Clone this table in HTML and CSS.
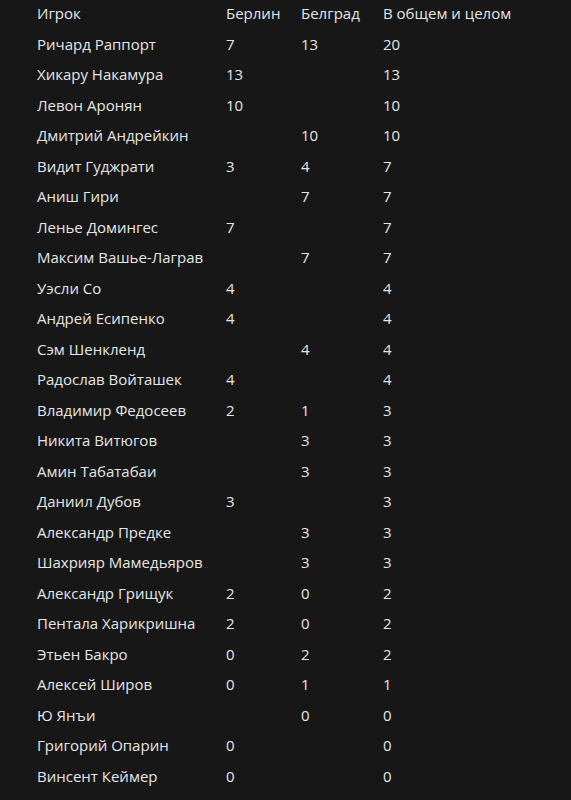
FILE: index.html
```html
<!DOCTYPE html>
<html lang="ru">
<head>
  <meta charset="UTF-8" />
  <meta name="viewport" content="width=device-width, initial-scale=1.0" />
  <title>Гран-при ФИДЕ</title>
  <link rel="stylesheet" href="styles.css">
</head>
<body>
  <table class="standings">
    <thead>
      <tr><th>Игрок</th><th>Берлин</th><th>Белград</th><th>В общем и целом</th></tr>
    </thead>
    <tbody>
      <tr><td>Ричард Раппорт</td><td>7</td><td>13</td><td>20</td></tr>
      <tr><td>Хикару Накамура</td><td>13</td><td></td><td>13</td></tr>
      <tr><td>Левон Аронян</td><td>10</td><td></td><td>10</td></tr>
      <tr><td>Дмитрий Андрейкин</td><td></td><td>10</td><td>10</td></tr>
      <tr><td>Видит Гуджрати</td><td>3</td><td>4</td><td>7</td></tr>
      <tr><td>Аниш Гири</td><td></td><td>7</td><td>7</td></tr>
      <tr><td>Ленье Домингес</td><td>7</td><td></td><td>7</td></tr>
      <tr><td>Максим Вашье-Лаграв</td><td></td><td>7</td><td>7</td></tr>
      <tr><td>Уэсли Со</td><td>4</td><td></td><td>4</td></tr>
      <tr><td>Андрей Есипенко</td><td>4</td><td></td><td>4</td></tr>
      <tr><td>Сэм Шенкленд</td><td></td><td>4</td><td>4</td></tr>
      <tr><td>Радослав Войташек</td><td>4</td><td></td><td>4</td></tr>
      <tr><td>Владимир Федосеев</td><td>2</td><td>1</td><td>3</td></tr>
      <tr><td>Никита Витюгов</td><td></td><td>3</td><td>3</td></tr>
      <tr><td>Амин Табатабаи</td><td></td><td>3</td><td>3</td></tr>
      <tr><td>Даниил Дубов</td><td>3</td><td></td><td>3</td></tr>
      <tr><td>Александр Предке</td><td></td><td>3</td><td>3</td></tr>
      <tr><td>Шахрияр Мамедьяров</td><td></td><td>3</td><td>3</td></tr>
      <tr><td>Александр Грищук</td><td>2</td><td>0</td><td>2</td></tr>
      <tr><td>Пентала Харикришна</td><td>2</td><td>0</td><td>2</td></tr>
      <tr><td>Этьен Бакро</td><td>0</td><td>2</td><td>2</td></tr>
      <tr><td>Алексей Широв</td><td>0</td><td>1</td><td>1</td></tr>
      <tr><td>Ю Янъи</td><td></td><td>0</td><td>0</td></tr>
      <tr><td>Григорий Опарин</td><td>0</td><td></td><td>0</td></tr>
      <tr><td>Винсент Кеймер</td><td>0</td><td></td><td>0</td></tr>
    </tbody>
  </table>
</body>
</html>
```

FILE: styles.css
```css
* {
  margin: 0;
  padding: 0;
  box-sizing: border-box;
}
html, body {
  background-color: #171717;
}
body {
  font-family: 'Open Sans', 'Noto Sans', sans-serif;
  font-size: 15px;
  color: #e6e6e6;
  padding: 0 0 0 37px;
}
.standings {
  border-collapse: collapse;
  margin-top: -2px;
}
.standings th,
.standings td {
  text-align: left;
  font-weight: normal;
  line-height: 30.5px;
  height: 30.5px;
  padding: 0;
  white-space: nowrap;
}
.standings th:nth-child(1),
.standings td:nth-child(1) {
  width: 189px;
}
.standings th:nth-child(2),
.standings td:nth-child(2) {
  width: 75px;
}
.standings th:nth-child(3),
.standings td:nth-child(3) {
  width: 82px;
}
```
